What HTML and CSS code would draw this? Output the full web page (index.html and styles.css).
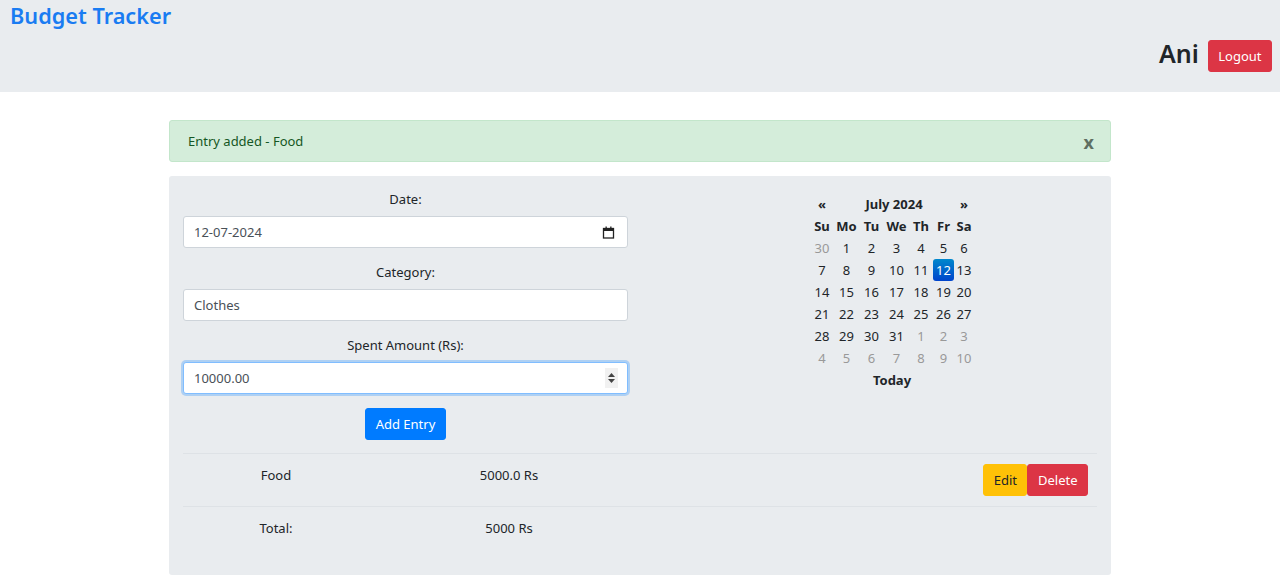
FILE: index.html
```html
<!DOCTYPE html>
<html lang="en">
<head>
<meta charset="utf-8">
<title>Budget Tracker</title>
<link rel="stylesheet" href="styles.css">
</head>
<body>
<header class="topbar">
  <div class="brand">Budget Tracker</div>
  <div class="user">
    <span class="user-name">Ani</span>
    <button class="btn btn-danger">Logout</button>
  </div>
</header>
<main class="container">
  <div class="alert">
    <span>Entry added - Food</span>
    <span class="close">x</span>
  </div>
  <section class="panel">
    <div class="top-row">
      <form class="entry-form">
        <label class="label">Date:</label>
        <div class="field">
          <input class="field-input" type="text" value="12-07-2024">
          <svg class="cal-icon" width="13" height="13" viewBox="0 0 13 13"><rect x="1.5" y="2.5" width="10" height="9.5" fill="none" stroke="#222" stroke-width="1.3"/><rect x="1.5" y="2.5" width="10" height="2.5" fill="#222"/><rect x="3.5" y="0.5" width="1.3" height="2.5" fill="#222"/><rect x="8.2" y="0.5" width="1.3" height="2.5" fill="#222"/></svg>
        </div>
        <label class="label">Category:</label>
        <div class="field">
          <input class="field-input" type="text" value="Clothes">
        </div>
        <label class="label">Spent Amount (Rs):</label>
        <div class="field focused">
          <input class="field-input" type="text" value="10000.00">
          <span class="spinner"><svg width="9" height="14" viewBox="0 0 9 14"><path d="M4.5 2 L8 6 H1 Z" fill="#444"/><path d="M4.5 12 L8 8 H1 Z" fill="#444"/></svg></span>
        </div>
        <div class="submit-row"><button type="button" class="btn btn-primary">Add Entry</button></div>
      </form>
      <div class="calendar-wrap">
        <table class="calendar">
          <colgroup>
            <col class="w24"><col class="w25"><col class="w25"><col class="w25"><col class="w24"><col class="w21"><col class="w20">
          </colgroup>
          <thead>
            <tr class="cal-head"><th class="nav">«</th><th colspan="5" class="month">July 2024</th><th class="nav">»</th></tr>
            <tr class="dow"><th>Su</th><th>Mo</th><th>Tu</th><th>We</th><th>Th</th><th>Fr</th><th>Sa</th></tr>
          </thead>
          <tbody>
            <tr><td class="muted">30</td><td>1</td><td>2</td><td>3</td><td>4</td><td>5</td><td>6</td></tr>
            <tr><td>7</td><td>8</td><td>9</td><td>10</td><td>11</td><td class="active">12</td><td>13</td></tr>
            <tr><td>14</td><td>15</td><td>16</td><td>17</td><td>18</td><td>19</td><td>20</td></tr>
            <tr><td>21</td><td>22</td><td>23</td><td>24</td><td>25</td><td>26</td><td>27</td></tr>
            <tr><td>28</td><td>29</td><td>30</td><td>31</td><td class="muted">1</td><td class="muted">2</td><td class="muted">3</td></tr>
            <tr><td class="muted">4</td><td class="muted">5</td><td class="muted">6</td><td class="muted">7</td><td class="muted">8</td><td class="muted">9</td><td class="muted">10</td></tr>
          </tbody>
          <tfoot>
            <tr><th colspan="7" class="today">Today</th></tr>
          </tfoot>
        </table>
      </div>
    </div>
    <div class="entries">
      <div class="entry-row">
        <span class="c1">Food</span>
        <span class="c2">5000.0 Rs</span>
        <span class="c3"><button class="btn btn-warning">Edit</button><button class="btn btn-danger">Delete</button></span>
      </div>
      <div class="entry-row">
        <span class="c1">Total:</span>
        <span class="c2">5000 Rs</span>
        <span class="c3"></span>
      </div>
    </div>
  </section>
</main>
</body>
</html>
```
FILE: styles.css
```css
* { box-sizing: border-box; }
html, body { margin: 0; padding: 0; }
body {
  font-family: "Noto Sans", "Open Sans", sans-serif;
  font-size: 13px;
  color: #212529;
  background: #fff;
}
.topbar {
  background: #e9ecef;
  height: 92px;
  padding: 0 8px 0 10px;
  display: flex;
  justify-content: space-between;
  align-items: flex-start;
}
.brand {
  color: #1a7cf2;
  font-size: 21.7px;
  font-weight: 600;
  line-height: 32px;
}
.user {
  display: flex;
  align-items: flex-start;
  margin-top: 40px;
  gap: 9px;
}
.user-name {
  font-size: 25px;
  font-weight: 600;
  color: #212529;
  line-height: 30px;
  margin-top: -2px;
}
.btn {
  font-family: inherit;
  font-size: 13px;
  border: 1px solid transparent;
  border-radius: 3px;
  padding: 0 9.5px;
  height: 32px;
  cursor: pointer;
  line-height: 30px;
}
.btn-danger { background: #dc3545; border-color: #dc3545; color: #fff; }
.btn-primary { background: #007bff; border-color: #007bff; color: #fff; }
.btn-warning { background: #ffc107; border-color: #ffc107; color: #212529; }
.container {
  width: 942px;
  margin: 28px auto 0;
}
.alert {
  background: #d4edda;
  border: 1px solid #c3e6cb;
  color: #155724;
  border-radius: 3px;
  height: 42px;
  padding: 0 18px;
  display: flex;
  align-items: center;
  justify-content: space-between;
}
.close {
  font-size: 18px;
  font-weight: 700;
  color: #5f6f62;
  margin-top: 2px;
  margin-right: -2px;
}
.panel {
  background: #e9ecef;
  border-radius: 3px;
  margin-top: 14px;
  padding: 13px 14px 16px;
}
.top-row {
  display: flex;
  align-items: flex-start;
}
.entry-form {
  width: 445px;
  display: flex;
  flex-direction: column;
}
.label {
  text-align: center;
  display: block;
  line-height: 20px;
  margin: 0 0 7px;
}
.field {
  height: 32px;
  background: #fff;
  border: 1px solid #ced4da;
  border-radius: 3px;
  display: flex;
  align-items: center;
  padding: 0 10px 0 10px;
  margin-bottom: 14px;
}
.field.focused {
  border: 1px solid #80bdff;
  box-shadow: 0 0 0 2px rgba(0, 123, 255, 0.25);
}
.field-input {
  flex: 1;
  border: none;
  outline: none;
  background: transparent;
  font-family: inherit;
  font-size: 13px;
  color: #495057;
  padding: 0;
  min-width: 0;
}
.cal-icon { margin-right: 2px; }
.spinner {
  width: 13px;
  height: 20px;
  background: #f1f1f1;
  display: flex;
  align-items: center;
  justify-content: center;
  margin-right: -1px;
}
.submit-row {
  display: flex;
  justify-content: center;
}
.calendar-wrap {
  flex: 1;
  display: flex;
  align-items: flex-start;
  padding-left: 182px;
  margin-top: 4px;
}
.calendar {
  border-collapse: collapse;
  font-size: 13px;
  table-layout: fixed;
  width: 164px;
}
.w20 { width: 20px; }
.w21 { width: 21px; }
.w24 { width: 24px; }
.w25 { width: 25px; }
.calendar th, .calendar td {
  text-align: center;
  height: 22px;
  padding: 0;
  white-space: nowrap;
}
.calendar th { font-weight: 700; }
.calendar td.muted { color: #999; }
.calendar td.active {
  background: linear-gradient(to bottom, #0088cc, #0044cc);
  color: #fff;
  border-radius: 3px;
}
.entries {
  margin-top: 13px;
}
.entry-row {
  display: grid;
  grid-template-columns: 186px 280px 1fr;
  align-items: start;
  border-top: 1px solid #dee2e6;
  height: 53px;
  padding-top: 10px;
}
.c1, .c2 {
  text-align: center;
  line-height: 20px;
  padding-top: 1px;
}
.c3 {
  display: flex;
  justify-content: flex-end;
  padding-right: 9px;
}
```
